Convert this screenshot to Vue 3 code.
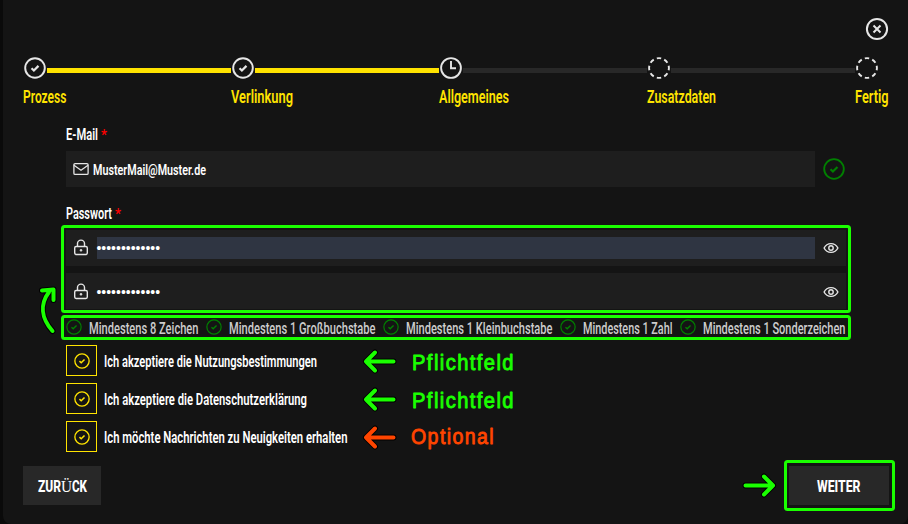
<script setup>
import { h } from 'vue'

// Condensed label: real text fitted to a given width.
const Fit = (p) =>
  h('svg', { class: 'fit', width: p.w, height: p.size, style: { fontSize: p.size + 'px' } }, [
    h('text', { x: 0, y: p.base ?? p.size - 3, textLength: p.w, lengthAdjust: 'spacingAndGlyphs', fill: 'currentColor' }, p.text),
  ])
Fit.props = ['text', 'w', 'size', 'base']

const Check = (p) =>
  h('svg', { class: 'check', width: p.size, height: p.size, viewBox: '0 0 24 24', fill: 'none', stroke: 'currentColor', 'stroke-width': p.sw ?? 2 }, [
    h('circle', { cx: 12, cy: 12, r: 10.7 }),
    h('path', { d: 'M8.2 12.2l2.6 2.5 5-5', 'stroke-width': (p.sw ?? 2) * 1.15 }),
  ])
Check.props = ['size', 'sw']

const steps = [
  { label: 'Prozess', w: 43.5, state: 'done' },
  { label: 'Verlinkung', w: 62, state: 'done' },
  { label: 'Allgemeines', w: 70, state: 'now' },
  { label: 'Zusatzdaten', w: 69, state: 'open' },
  { label: 'Fertig', w: 33.5, state: 'open' },
]
const rules = [
  { label: 'Mindestens 8 Zeichen', w: 109.5, cell: 140 },
  { label: 'Mindestens 1 Großbuchstabe', w: 146.5, cell: 177 },
  { label: 'Mindestens 1 Kleinbuchstabe', w: 146.5, cell: 177 },
  { label: 'Mindestens 1 Zahl', w: 89.5, cell: 120 },
  { label: 'Mindestens 1 Sonderzeichen', w: 142.5, cell: 160 },
]
const consents = [
  { label: 'Ich akzeptiere die Nutzungsbestimmungen', w: 213 },
  { label: 'Ich akzeptiere die Datenschutzerklärung', w: 203 },
  { label: 'Ich möchte Nachrichten zu Neuigkeiten erhalten', w: 243.5 },
]
const dots = '•'.repeat(13)
</script>

<template>
  <main class="panel">
    <header class="top">
      <svg class="close" width="24" height="24" viewBox="0 0 24 24" fill="none" stroke="currentColor" stroke-width="2">
        <circle cx="12" cy="12" r="10.1" />
        <path d="M8.5 8.5l7 7M15.5 8.5l-7 7" />
      </svg>
    </header>

    <ol class="steps">
      <li v-for="(s, i) in steps" :key="s.label" class="step" :class="{ last: i === 4 }">
        <div class="rail">
          <Check v-if="s.state === 'done'" :size="22" :sw="2.1" />
          <svg v-else width="22" height="22" viewBox="0 0 22 22" fill="none" stroke="currentColor" stroke-width="1.9">
            <circle v-if="s.state === 'now'" cx="11" cy="11" r="9.9" />
            <circle v-else cx="11" cy="11" r="9.9" pathLength="80" stroke-dasharray="5.8 4.2" stroke-dashoffset="2.9" />
            <path v-if="s.state === 'now'" d="M11 4v7.2h5" />
          </svg>
          <span v-if="i < 4" class="line" :class="{ filled: i < 2 }"></span>
        </div>
        <Fit class="name" :text="s.label" :w="s.w" :size="17.5" :base="14" />
      </li>
    </ol>

    <form class="form">
      <label class="caption"><Fit text="E-Mail" :w="32" :size="16" :base="13" /><Fit class="star" text="*" :w="6" :size="14" :base="12.5" /></label>
      <div class="mailrow">
        <div class="field mail">
          <svg width="16" height="14" viewBox="0 0 16 14" fill="none" stroke="currentColor" stroke-width="1.3">
            <rect x="0.9" y="1.6" width="14.2" height="10.8" rx="1.2" />
            <path d="M1 3.3l7 5 7-5" />
          </svg>
          <Fit class="mailtext" text="MusterMail@Muster.de" :w="113" :size="15" :base="12" />
        </div>
        <Check class="valid" :size="22" />
      </div>
      <label class="caption second"><Fit text="Passwort" :w="46" :size="16" :base="13" /><Fit class="star" text="*" :w="6" :size="14" :base="12.5" /></label>
      <div class="passwords">
        <div v-for="n in 2" :key="n" class="field" :class="{ repeat: n === 2 }">
          <svg class="lock" width="16" height="18" viewBox="0 0 16 18" fill="none" stroke="currentColor" stroke-width="1.4">
            <rect x="1.7" y="7.5" width="12.6" height="8" rx="1.4" />
            <path d="M4.5 7.5V4.6a3.5 3.5 0 0 1 7 0v2.9" />
            <circle cx="8" cy="11.3" r="1" fill="currentColor" stroke-width=".6" />
          </svg>
          <span class="secret" :class="{ selected: n === 1 }">{{ dots }}</span>
          <svg class="eye" width="16" height="12" viewBox="0 0 16 12" fill="none" stroke="currentColor" stroke-width="1.4">
            <path d="M1.1 6C4 .2 12 .2 14.9 6C12 11.8 4 11.8 1.1 6z" />
            <circle cx="8" cy="6" r="2.2" />
          </svg>
        </div>
      </div>
      <ul class="rules">
        <li v-for="r in rules" :key="r.label" :style="{ width: r.cell + 'px' }">
          <Check :size="16" :sw="1.8" /><Fit :text="r.label" :w="r.w" :size="15.7" :base="13" />
        </li>
      </ul>
      <div class="consents">
        <label v-for="c in consents" :key="c.label">
          <span class="box"><Check :size="16" :sw="2" /></span>
          <Fit :text="c.label" :w="c.w" :size="15.6" :base="13" />
        </label>
      </div>
    </form>

    <footer class="actions">
      <button class="back"><Fit text="ZUR" :w="23" :size="17" :base="14" /><Fit class="serif" text="Ü" :w="11" :size="17" :base="14" /><Fit text="CK" :w="15" :size="17" :base="14" /></button>
      <button class="next"><Fit text="WEITER" :w="43.5" :size="17" :base="14" /></button>
    </footer>

    <svg class="notes" width="908" height="524" fill="none" stroke-linecap="round" stroke-linejoin="round">
      <defs>
        <path id="arrow" d="M29.5 0H2M11 -9L2 0L11 9" />
        <path id="curve" d="M52.5 331C41 318 40 304 49 292M42 290.5L53.5 289.5L53.5 300" />
      </defs>
      <g stroke="#1aff00" stroke-width="3">
        <rect x="62.5" y="226.5" width="787" height="85" rx="2" />
        <rect x="62.5" y="316.5" width="787" height="22" rx="2" />
        <rect x="785.5" y="461.5" width="108" height="48" rx="2" />
      </g>
      <g stroke="#000" stroke-width="6">
        <use href="#arrow" x="364" y="361.5" /><use href="#arrow" x="364" y="399.5" /><use href="#arrow" x="364" y="437.5" />
        <use href="#arrow" transform="translate(775 485.5) scale(-1 1)" />
        <use href="#curve" />
      </g>
      <g stroke="#1aff00" stroke-width="4">
        <use href="#arrow" x="364" y="361.5" /><use href="#arrow" x="364" y="399.5" />
        <use href="#arrow" transform="translate(775 485.5) scale(-1 1)" />
        <use href="#curve" />
      </g>
      <use href="#arrow" x="364" y="437.5" stroke="#ff4500" stroke-width="4" />
      <g class="hand">
        <text x="412" y="370" textLength="103" lengthAdjust="spacingAndGlyphs" fill="#1aff00" stroke="#1aff00">Pflichtfeld</text>
        <text x="412" y="408" textLength="103" lengthAdjust="spacingAndGlyphs" fill="#1aff00" stroke="#1aff00">Pflichtfeld</text>
        <text x="411" y="444" textLength="84" lengthAdjust="spacingAndGlyphs" fill="#ff4500" stroke="#ff4500">Optional</text>
      </g>
    </svg>
  </main>
</template>

<style>
body { background: #0a0a0a; overflow: hidden; }
</style>

<style scoped>
* { box-sizing: border-box; }
.panel { position: relative; height: 524px; margin-left: 3px; background: #141414; border-radius: 0 0 8px 8px; color: #e6e6e6; font-family: Roboto, "Liberation Sans", sans-serif; font-weight: 600; overflow: hidden; }
.panel :deep(svg) { display: block; flex: none; overflow: visible; }
.top { display: flex; justify-content: flex-end; padding: 17px 19px 0 0; height: 56px; }
ol, ul { list-style: none; margin: 0; padding: 0; }
.steps { display: flex; padding-left: 20px; height: 70px; }
.step { width: 208px; flex: none; }
.step.last { width: 36px; }
.rail { display: flex; gap: 1px; height: 33px; padding: 1px 0 0 1px; }
.line { width: 184px; height: 5px; margin-top: 11px; background: #282828; }
.line.filled { background: #ffe300; }
.name { color: #ffe300; }
.form { padding-left: 63px; }
.caption { display: flex; gap: 3px; height: 25px; padding-top: 1px; color: #fff; }
.caption.second { height: 43px; padding-top: 19px; }
.star { color: #f00; }
.mailrow { display: flex; align-items: center; gap: 8px; }
.field { display: flex; align-items: center; width: 780px; height: 36px; padding-left: 7px; background: #1e1e1e; }
.field.repeat { padding-top: 2px; }
.field.mail { width: 749px; gap: 4px; }
.mailtext { color: #fff; margin-top: 2px; }
.valid { color: #008000; }
.passwords { display: grid; gap: 7px; }
.secret { width: 718px; height: 22px; margin: 0 8px; font: 14px/22px "Liberation Sans", sans-serif; color: #fff; text-indent: -0.6px; }
.secret.selected { background: #2f3542; }
.rules { display: flex; height: 36px; padding-top: 10px; color: #ccc; font-weight: 500; }
.rules li { display: flex; gap: 7px; flex: none; }
.rules li :deep(.check) { color: #008000; }
.rules li :deep(.fit) { margin-top: 2px; }
.consents { display: grid; gap: 7px; color: #fff; }
.consents label { display: flex; align-items: center; gap: 7px; }
.box { display: grid; place-items: center; width: 31px; height: 31px; border: 1px solid #ffe300; color: #ffe300; }
.box :deep(.check) { position: relative; left: 0.5px; top: 0.5px; }
.consents :deep(.fit) { margin-top: 2px; }
.actions { display: flex; justify-content: space-between; padding: 14px 16px 0 20px; }
button { display: flex; align-items: center; justify-content: center; height: 39px; padding: 2px 0 0; border: 0; background: #282828; color: #fff; font-family: inherit; font-weight: 800; }
.back { width: 78px; }
.next { width: 100px; margin-right: 3px; }
.serif { font-family: "Liberation Serif", serif; font-weight: 400; }
.notes { position: absolute; left: -3px; top: 0; pointer-events: none; }
.hand { font: 22.5px "Liberation Sans", sans-serif; letter-spacing: 1.6px; stroke-width: 0.9; }
</style>
